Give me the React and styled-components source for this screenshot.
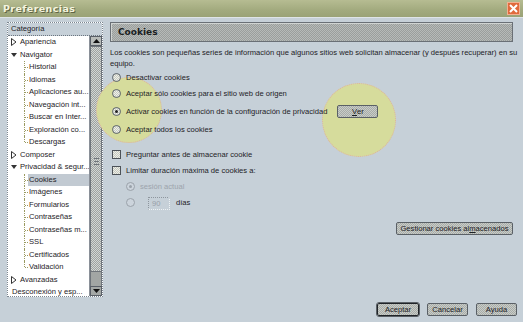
import React from 'react'
import styled, { createGlobalStyle } from 'styled-components'

const GlobalStyle = createGlobalStyle`
  body {
    margin: 0;
    background: #c6d0d8;
    font-family: "Liberation Sans", Arial, sans-serif;
    font-size: 7.6px;
    color: #1e2226;
  }
`

const dither = (a, b) => `repeating-conic-gradient(${a} 0 25%, ${b} 0 50%) 0 0 / 2px 2px`

const categories = [
  { label: 'Apariencia', level: 0, icon: 'closed' },
  { label: 'Navigator', level: 0, icon: 'open' },
  { label: 'Historial', level: 1 },
  { label: 'Idiomas', level: 1 },
  { label: 'Aplicaciones au...', level: 1 },
  { label: 'Navegación int...', level: 1 },
  { label: 'Buscar en Inter...', level: 1 },
  { label: 'Exploración co...', level: 1 },
  { label: 'Descargas', level: 1, last: true },
  { label: 'Composer', level: 0, icon: 'closed' },
  { label: 'Privacidad & segur...', level: 0, icon: 'open' },
  { label: 'Cookies', level: 1, selected: true },
  { label: 'Imágenes', level: 1 },
  { label: 'Formularios', level: 1 },
  { label: 'Contraseñas', level: 1 },
  { label: 'Contraseñas m...', level: 1 },
  { label: 'SSL', level: 1 },
  { label: 'Certificados', level: 1 },
  { label: 'Validación', level: 1, last: true },
  { label: 'Avanzadas', level: 0, icon: 'closed' },
  { label: 'Desconexión y esp...', level: 0 },
]

const cookieModes = [
  { label: 'Desactivar cookies' },
  { label: 'Aceptar sólo cookies para el sitio web de origen' },
  { label: 'Activar cookies en función de la configuración de privacidad', checked: true, button: 'Ver' },
  { label: 'Aceptar todos los cookies' },
]

const App = () => {
  return (
    <>
      <GlobalStyle />
      <Window>
        <TitleBar>
          <Title>Preferencias</Title>
          <CloseButton>
            <svg width="9" height="9" viewBox="0 0 9 9">
              <path d="M1 1 L8 8 M8 1 L1 8" stroke="#fff" strokeWidth="2" />
            </svg>
          </CloseButton>
        </TitleBar>

        <Main>
          <Sidebar>
            <SidebarHeader>Categoría</SidebarHeader>
            <SidebarBody>
              <Tree>
                {categories.map((c) => (
                  <TreeRow key={c.label} $level={c.level} $selected={c.selected} $last={c.last}>
                    {c.icon === 'closed' && (
                      <Twisty viewBox="0 0 6 8">
                        <path d="M0.5 0.5 L5 4 L0.5 7.5 Z" fill="#fff" stroke="#333" strokeWidth="1" />
                      </Twisty>
                    )}
                    {c.icon === 'open' && (
                      <Twisty viewBox="0 0 6 8">
                        <path d="M0 2 L6 2 L3 6 Z" fill="#333" />
                      </Twisty>
                    )}
                    <TreeLabel $selected={c.selected}>{c.label}</TreeLabel>
                  </TreeRow>
                ))}
              </Tree>
              <Scrollbar>
                <ScrollArrow>
                  <svg width="7" height="4" viewBox="0 0 7 4"><path d="M0 4 L3.5 0 L7 4 Z" fill="#111" /></svg>
                </ScrollArrow>
                <ScrollThumb>
                  <Grip />
                </ScrollThumb>
                <ScrollTrack />
                <ScrollArrow $down>
                  <svg width="7" height="4" viewBox="0 0 7 4"><path d="M0 0 L7 0 L3.5 4 Z" fill="#111" /></svg>
                </ScrollArrow>
              </Scrollbar>
            </SidebarBody>
          </Sidebar>

          <Panel>
            <Highlight style={{ left: -14, top: 55, width: 66, height: 66 }} />
            <Highlight style={{ left: 212, top: 61, width: 74, height: 74 }} />
            <PanelContent>
              <PanelHeader>Cookies</PanelHeader>
              <Description>
                Los cookies son pequeñas series de información que algunos sitios web solicitan almacenar (y después recuperar) en su equipo.
              </Description>

              <OptionGroup>
                {cookieModes.map((m) => (
                  <OptionRow key={m.label} $tall={!!m.button}>
                    <Radio $checked={m.checked} />
                    <OptionLabel>{m.label}</OptionLabel>
                    {m.button && (
                      <SmallButton $width={41} $offset={10}>
                        <u>V</u>er
                      </SmallButton>
                    )}
                  </OptionRow>
                ))}
              </OptionGroup>

              <CheckGroup>
                <OptionRow>
                  <Checkbox />
                  <OptionLabel>Preguntar antes de almacenar cookie</OptionLabel>
                </OptionRow>
                <OptionRow>
                  <Checkbox />
                  <OptionLabel>Limitar duración máxima de cookies a:</OptionLabel>
                </OptionRow>
                <SubRow>
                  <Radio $checked $disabled />
                  <OptionLabel $disabled>sesión actual</OptionLabel>
                </SubRow>
                <SubRow>
                  <Radio $disabled />
                  <DaysInput>90</DaysInput>
                  <OptionLabel>días</OptionLabel>
                </SubRow>
              </CheckGroup>

              <ManageRow>
                <SmallButton $width={117}>
                  Gestionar cookies al<u>m</u>acenados
                </SmallButton>
              </ManageRow>
            </PanelContent>
          </Panel>
        </Main>

        <Footer>
          <SmallButton $width={42} $default>Aceptar</SmallButton>
          <SmallButton $width={41}>Cancelar</SmallButton>
          <SmallButton $width={41}>Ayuda</SmallButton>
        </Footer>
      </Window>
    </>
  )
}

export default App

const Window = styled.div`
  width: 523px;
  height: 322px;
  display: flex;
  flex-direction: column;
  overflow: hidden;
`

const TitleBar = styled.div`
  height: 18px;
  display: flex;
  align-items: center;
  justify-content: space-between;
  padding: 0 3px 0 3px;
  background: linear-gradient(#b6bc92, #a2aa7e 60%, #9aa276);
  border-bottom: 1px solid #dfe4e8;
  box-sizing: border-box;
  flex: none;
`

const Title = styled.span`
  font-family: "DejaVu Sans", sans-serif;
  font-weight: bold;
  font-size: 9.5px;
  color: #f4f4de;
  text-shadow: 1px 1px 0 #5e6446;
  letter-spacing: 0.4px;
`

const CloseButton = styled.div`
  width: 13px;
  height: 13px;
  margin-top: -1px;
  background: #e06a3c;
  border: 1px solid #f4b090;
  display: flex;
  align-items: center;
  justify-content: center;
  box-sizing: border-box;
`

const Main = styled.div`
  flex: none;
  height: 281px;
  display: flex;
  gap: 7px;
  padding: 4px 7px 0 7px;
  box-sizing: border-box;
`

const Sidebar = styled.div`
  width: 96px;
  height: 275px;
  border: 1px dotted #7c8690;
  box-sizing: border-box;
  display: flex;
  flex-direction: column;
  background: #fff;
`

const SidebarHeader = styled.div`
  height: 12px;
  line-height: 12px;
  padding-left: 3px;
  background: #c6d0d8;
  border-bottom: 1px dotted #6c7680;
  flex: none;
`

const SidebarBody = styled.div`
  flex: 1;
  display: flex;
  min-height: 0;
`

const Tree = styled.div`
  flex: 1;
  background: #fff;
  overflow: hidden;
`

const TreeRow = styled.div`
  position: relative;
  height: 12.5px;
  display: flex;
  align-items: center;
  padding-left: ${(p) => (p.$level ? 20 : 3)}px;
  white-space: nowrap;

  &::before {
    content: '';
    display: ${(p) => (p.$level ? 'block' : 'none')};
    position: absolute;
    left: 16px;
    top: 0;
    height: ${(p) => (p.$last ? '50%' : '100%')};
    border-left: 1px dotted #9a9a60;
  }

  &::after {
    content: '';
    display: ${(p) => (p.$level ? 'block' : 'none')};
    position: absolute;
    left: 17px;
    top: 50%;
    width: 3px;
    border-top: 1px dotted #9a9a60;
  }
`

const Twisty = styled.svg`
  width: 6px;
  height: 8px;
  margin-right: 2px;
  flex: none;
`

const TreeLabel = styled.span`
  padding: 0 2px 0 1px;
  line-height: 12px;
  background: ${(p) => (p.$selected ? '#c2cad2' : 'transparent')};
  ${(p) => p.$selected && 'flex: 1;'}
`

const Scrollbar = styled.div`
  width: 12px;
  flex: none;
  display: flex;
  flex-direction: column;
  border-left: 1px solid #8a9098;
  background: #c6d0d8;
`

const ScrollArrow = styled.div`
  height: 10px;
  flex: none;
  display: flex;
  align-items: center;
  justify-content: center;
  background: ${(p) => (p.$down ? '#a4a8a6' : '#b8bcba')};
  border: 1px solid #5a6068;
  box-sizing: border-box;
`

const ScrollThumb = styled.div`
  flex: 1;
  background: ${dither('#9ea2a0', '#d2d6d4')};
  border: 1px solid #6e747a;
  box-sizing: border-box;
  display: flex;
  align-items: center;
  justify-content: center;
`

const Grip = styled.div`
  width: 5px;
  height: 8px;
  margin-top: 6px;
  background: repeating-linear-gradient(#70767c 0 1px, transparent 1px 3px);
`

const ScrollTrack = styled.div`
  height: 14px;
  flex: none;
  background: #a2a6a4;
  border-left: 1px solid #6e747a;
  border-right: 1px solid #6e747a;
`

const Panel = styled.div`
  position: relative;
  flex: 1;
  height: 275px;
`

const Highlight = styled.div`
  position: absolute;
  border-radius: 50%;
  background: #d6dc9c;
  border: 1px dotted #e0b0a0;
  box-sizing: border-box;
`

const PanelContent = styled.div`
  position: relative;
  height: 100%;
  display: flex;
  flex-direction: column;
`

const PanelHeader = styled.div`
  height: 20px;
  margin-right: 3px;
  display: flex;
  align-items: center;
  padding-left: 7px;
  font-family: "DejaVu Sans", sans-serif;
  font-weight: bold;
  font-size: 9px;
  color: #1a1e22;
  background: ${dither('#9a9e9c', '#b6bab8')};
  border: 1px solid #6a7076;
  box-shadow: inset 1px 1px 0 #d0d4d2;
  box-sizing: border-box;
`

const Description = styled.div`
  margin-top: 5px;
  line-height: 11px;
  margin-right: -4px;
`

const OptionGroup = styled.div`
  margin-top: 0;
  display: flex;
  flex-direction: column;
`

const OptionRow = styled.div`
  height: ${(p) => (p.$tall ? 20 : 16)}px;
  display: flex;
  align-items: center;
  padding-left: 2px;
`

const Radio = styled.span`
  width: 9px;
  height: 9px;
  border-radius: 50%;
  flex: none;
  box-sizing: border-box;
  border: 1px solid ${(p) => (p.$disabled ? '#9aa2aa' : '#5c636a')};
  background: ${(p) => (p.$disabled ? '#ccd4dc' : dither('#c8ccc4', '#f0f0e8'))};
  display: flex;
  align-items: center;
  justify-content: center;
  margin-right: 5px;

  &::after {
    content: '';
    width: 3px;
    height: 3px;
    border-radius: 50%;
    background: ${(p) => (p.$disabled ? '#9aa2aa' : '#222')};
    display: ${(p) => (p.$checked ? 'block' : 'none')};
  }
`

const Checkbox = styled.span`
  width: 9px;
  height: 9px;
  flex: none;
  box-sizing: border-box;
  border: 1px solid #4c5258;
  background: ${dither('#c4c8c0', '#eeeee6')};
  margin-right: 5px;
`

const OptionLabel = styled.span`
  white-space: nowrap;
  color: ${(p) => (p.$disabled ? '#9ca4ac' : 'inherit')};
`

const CheckGroup = styled.div`
  margin-top: 9px;
  display: flex;
  flex-direction: column;
`

const SubRow = styled.div`
  height: 16px;
  display: flex;
  align-items: center;
  padding-left: 16px;
`

const DaysInput = styled.span`
  width: 22px;
  height: 13px;
  box-sizing: border-box;
  border: 1px dotted #8e969e;
  border-right-color: #eef2f4;
  border-bottom-color: #eef2f4;
  margin: 2px 6px 0 8px;
  padding-left: 3px;
  line-height: 11px;
  color: #98a0a8;
`

const ManageRow = styled.div`
  margin-top: 12px;
  display: flex;
  justify-content: flex-end;
  padding-right: 3px;
`

const SmallButton = styled.div`
  width: ${(p) => p.$width}px;
  height: 13px;
  margin-left: ${(p) => p.$offset || 0}px;
  box-sizing: border-box;
  display: flex;
  align-items: center;
  justify-content: center;
  white-space: nowrap;
  border: 1px solid ${(p) => (p.$default ? '#202428' : '#5a6066')};
  outline: ${(p) => (p.$default ? '1px solid #5a6066' : 'none')};
  border-radius: 2px;
  background: ${dither('#a8aca8', '#c8ccc8')};
  color: #1c2024;
  flex: none;
`

const Footer = styled.div`
  flex: 1;
  display: flex;
  justify-content: flex-end;
  gap: 8px;
  padding: 4px 6px 0 0;
  box-sizing: border-box;
`
